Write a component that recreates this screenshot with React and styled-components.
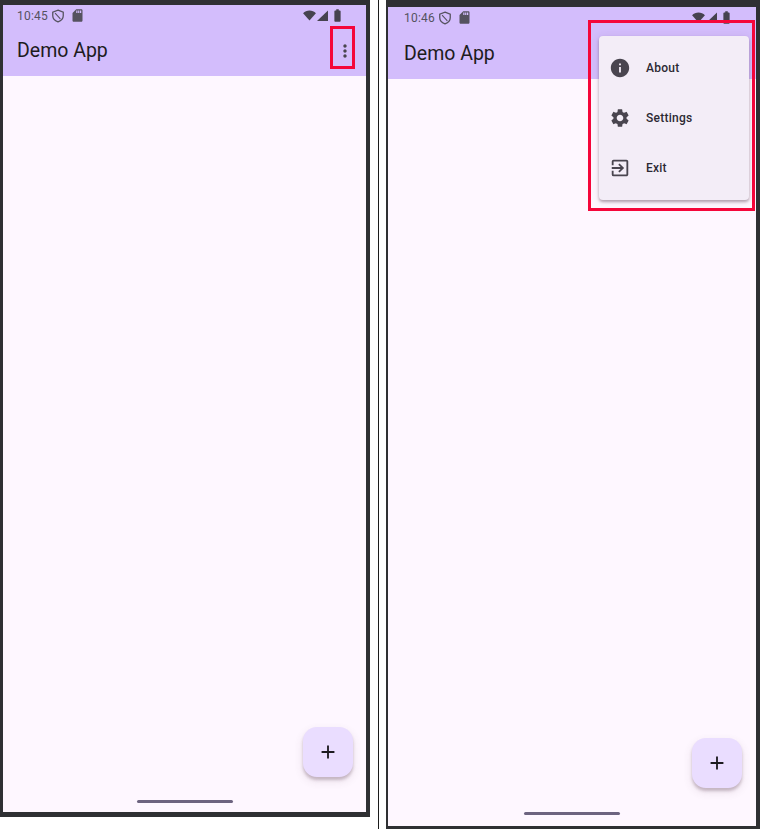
import React from 'react';
import styled, { createGlobalStyle } from 'styled-components';
import { MdInfo, MdSettings, MdExitToApp, MdMoreVert, MdAdd, MdSdCard, MdBatteryFull } from 'react-icons/md';

const GlobalStyle = createGlobalStyle`
	html, body {
		margin: 0;
		background: #fff;
		font-family: Roboto, "Liberation Sans", sans-serif;
	}
`;

const Page = styled.div`
	display: flex;
	align-items: flex-start;
	width: 762px;
	height: 829px;
	overflow: hidden;
`;

const Frame = styled.div`
	position: relative;
	box-sizing: border-box;
	display: flex;
	flex-direction: column;
	width: ${p => p.$width}px;
	height: ${p => p.$height}px;
	padding: ${p => p.$pad};
	background: #2f3033;
`;

const Divider = styled.div`
	width: 1px;
	height: 829px;
	margin: 0 7px 0 8px;
	background: #1c1c1c;
`;

const Screen = styled.div`
	position: relative;
	flex: 1;
	display: flex;
	flex-direction: column;
	background: #fef7ff;
`;

const TopBar = styled.header`
	display: flex;
	flex-direction: column;
	height: ${p => p.$height}px;
	background: #d3bdfc;
`;

const StatusBar = styled.div`
	display: flex;
	align-items: center;
	height: 21px;
	padding: 0 ${p => p.$right}px 0 ${p => p.$inset}px;
	color: #55525f;
	font-size: 12px;
	letter-spacing: 0.2px;
`;

const Time = styled.span`
	margin-right: 3px;
`;

const SdIcon = styled(MdSdCard)`
	margin-left: 5px;
`;

const StatusRight = styled.div`
	display: flex;
	align-items: center;
	gap: 1px;
	margin-left: auto;
	color: #46434f;
`;

const BatteryIcon = styled(MdBatteryFull)`
	margin-left: 1px;
`;

const ToolBar = styled.div`
	flex: 1;
	display: flex;
	align-items: center;
	justify-content: space-between;
	padding: 0 11px 1px ${p => p.$inset}px;
`;

const Title = styled.h1`
	margin: 0;
	font-size: 19.5px;
	font-weight: 400;
	color: #1d1b20;
`;

const MoreButton = styled.div`
	display: flex;
	color: #49454f;
`;

const Highlight = styled.div`
	position: absolute;
	box-sizing: border-box;
	top: ${p => p.$top}px;
	left: ${p => p.$left}px;
	width: ${p => p.$width}px;
	height: ${p => p.$height}px;
	border: 3px solid #f5063a;
`;

const Menu = styled.ul`
	position: absolute;
	top: 29px;
	left: 211px;
	box-sizing: border-box;
	width: 150px;
	height: 164px;
	margin: 0;
	padding: 7px 0;
	list-style: none;
	background: #f3edf7;
	border-radius: 4px;
	box-shadow: 0 2px 3px rgba(80, 50, 70, 0.4), 0 1px 8px rgba(80, 50, 70, 0.12);
`;

const MenuItem = styled.li`
	display: flex;
	align-items: center;
	gap: 15px;
	height: 50px;
	padding-left: 10px;
	font-size: 12px;
	font-weight: 500;
	letter-spacing: 0.25px;
	color: #2c2933;
	svg {
		color: #49454f;
	}
`;

const Fab = styled.div`
	position: absolute;
	right: ${p => p.$right}px;
	bottom: ${p => p.$bottom}px;
	display: flex;
	align-items: center;
	justify-content: center;
	width: 50px;
	height: 50px;
	border-radius: 14px;
	background: #eaddff;
	color: #1d1b20;
	box-shadow: 0 3px 3px rgba(90, 60, 80, 0.28), 0 4px 10px rgba(90, 60, 80, 0.12);
`;

const HomeBar = styled.div`
	position: absolute;
	left: 50%;
	bottom: ${p => p.$bottom}px;
	width: 96px;
	height: 3px;
	margin-left: -48px;
	border-radius: 2px;
	background: #6d6480;
`;

const Wifi = () => (
	<svg width="13" height="11" viewBox="0 0 14 12" fill="currentColor">
		<path d="M0 3.6C1.8 1.6 4.3.6 7 .6s5.2 1 7 3L7 11.4z" />
	</svg>
);

const Signal = () => (
	<svg width="11" height="11" viewBox="0 0 12 12" fill="currentColor">
		<path d="M12 .5V12H0z" />
	</svg>
);

const Shield = () => (
	<svg width="14" height="14" viewBox="0 0 24 24" fill="none" stroke="currentColor" strokeWidth="2.2">
		<path d="M12 2l9 3.500v6c0 5-4 8.500-9 10.500-5-2-9-5.500-9-10.500v-6z" />
		<path d="M7 7l9 10" strokeWidth="1.800" />
	</svg>
);

const menuItems = [
	{ label: 'About', Icon: MdInfo },
	{ label: 'Settings', Icon: MdSettings },
	{ label: 'Exit', Icon: MdExitToApp },
];

const Phone = ({ time, width, height, pad, barHeight, inset, statusRight, homeBottom, fabRight, fabBottom, children }) => (
	<Frame $width={width} $height={height} $pad={pad}>
		<Screen>
			<TopBar $height={barHeight}>
				<StatusBar $inset={inset} $right={statusRight}>
					<Time>{time}</Time>
					<Shield />
					<SdIcon size={15} />
					<StatusRight>
						<Wifi />
						<Signal />
						<BatteryIcon size={15} />
					</StatusRight>
				</StatusBar>
				<ToolBar $inset={inset}>
					<Title>Demo App</Title>
					<MoreButton><MdMoreVert size={20} /></MoreButton>
				</ToolBar>
			</TopBar>
			<Fab $right={fabRight} $bottom={fabBottom}><MdAdd size={22} /></Fab>
			<HomeBar $bottom={homeBottom} />
			{children}
		</Screen>
	</Frame>
);

const App = () => (
	<Page>
		<GlobalStyle />
		<Phone time="10:45" width={370} height={817} pad="5px 4px 5px 3px" barHeight={71} inset={14} statusRight={21} homeBottom={9} fabRight={13} fabBottom={35}>
			<Highlight $top={21} $left={327} $width={25} $height={43} />
		</Phone>
		<Divider />
		<Phone time="10:46" width={374} height={829} pad="7px 4px 3px 2px" barHeight={72} inset={16} statusRight={22} homeBottom={11} fabRight={14} fabBottom={38}>
			<Highlight $top={13} $left={200} $width={167} $height={191} />
			<Menu>
				{menuItems.map(({ label, Icon }) => (
					<MenuItem key={label}>
						<Icon size={22} />
						{label}
					</MenuItem>
				))}
			</Menu>
		</Phone>
	</Page>
);

export default App;
